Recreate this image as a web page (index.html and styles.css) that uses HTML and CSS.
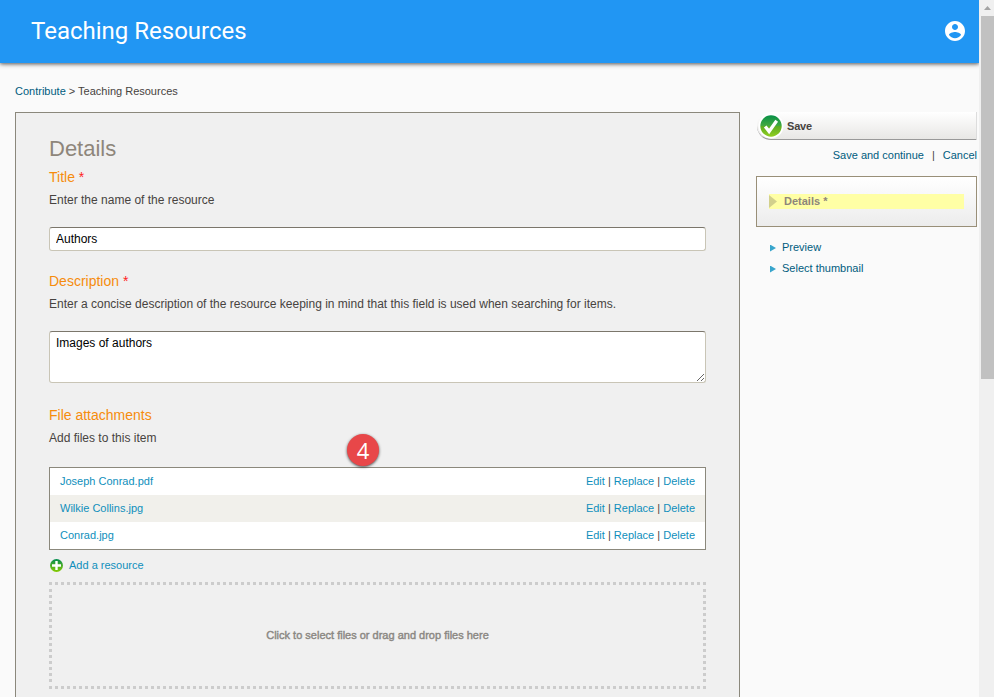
FILE: index.html
```html
<!DOCTYPE html>
<html lang="en">
<head>
<meta charset="utf-8">
<title>Teaching Resources</title>
<link rel="stylesheet" href="styles.css">
</head>
<body>
<div class="window">
  <div class="page">
    <header class="appbar">
      <h1 class="appbar-title">Teaching Resources</h1>
      <svg class="account" viewBox="0 0 24 24" width="24" height="24"><path fill="#fff" d="M12 2C6.48 2 2 6.48 2 12s4.480 10 10 10 10-4.480 10-10S17.520 2 12 2zm0 3c1.660 0 3 1.340 3 3s-1.340 3-3 3-3-1.340-3-3 1.340-3 3-3zm0 14.200c-2.500 0-4.710-1.280-6-3.220.030-1.990 4-3.080 6-3.080 1.990 0 5.970 1.090 6 3.080-1.290 1.940-3.500 3.220-6 3.220z"/></svg>
    </header>
    <nav class="crumbs"><a>Contribute</a> &gt; Teaching Resources</nav>
    <div class="columns">
      <main class="panel">
        <h2 class="heading">Details</h2>
        <section class="field">
          <h3 class="label">Title <span class="req">*</span></h3>
          <p class="hint">Enter the name of the resource</p>
          <input class="control line" type="text" value="Authors">
        </section>
        <section class="field">
          <h3 class="label">Description <span class="req">*</span></h3>
          <p class="hint">Enter a concise description of the resource keeping in mind that this field is used when searching for items.</p>
          <textarea class="control area">Images of authors</textarea>
        </section>
        <section class="field files-field">
          <h3 class="label">File attachments</h3>
          <p class="hint">Add files to this item</p>
          <div class="files">
            <div class="file"><a>Joseph Conrad.pdf</a><span class="actions"><a>Edit</a> | <a>Replace</a> | <a>Delete</a></span></div>
            <div class="file"><a>Wilkie Collins.jpg</a><span class="actions"><a>Edit</a> | <a>Replace</a> | <a>Delete</a></span></div>
            <div class="file"><a>Conrad.jpg</a><span class="actions"><a>Edit</a> | <a>Replace</a> | <a>Delete</a></span></div>
          </div>
          <span class="marker">4</span>
          <div class="add">
            <svg width="14" height="14" viewBox="0 0 14 14"><defs><linearGradient id="g1" x2="0" y2="1"><stop offset="0" stop-color="#008c50"/><stop offset=".5" stop-color="#4aac28"/><stop offset="1" stop-color="#86cc00"/></linearGradient></defs><circle cx="7.500" cy="7.500" r="6.500" fill="url(#g1)"/><path d="M7.500 3v9M3 7.500h9" stroke="#fff" stroke-width="2.400"/></svg>
            <a>Add a resource</a>
          </div>
          <div class="drop"><div class="drop-inner">Click to select files or drag and drop files here</div></div>
        </section>
      </main>
      <aside class="side">
        <button class="save">
          <svg width="26" height="26" viewBox="0 0 26 26"><defs><linearGradient id="g2" x2="0" y2="1"><stop offset="0" stop-color="#079048"/><stop offset=".48" stop-color="#42a940"/><stop offset=".52" stop-color="#5cac22"/><stop offset="1" stop-color="#92cf20"/></linearGradient></defs><circle cx="13" cy="13" r="12.500" fill="#fff"/><circle cx="13" cy="13" r="10.700" fill="url(#g2)"/><path d="M7.200 13.500l3.900 4.900 7.600-10.600" fill="none" stroke="#fff" stroke-width="3.300"/></svg>
          <span>Save</span>
        </button>
        <div class="links"><a>Save and continue</a><span>|</span><a>Cancel</a></div>
        <div class="steps"><div class="step"><i></i><span>Details *</span></div></div>
        <ul class="extra"><li><a>Preview</a></li><li><a>Select thumbnail</a></li></ul>
      </aside>
    </div>
  </div>
  <div class="scroll"><div class="arrow"></div><div class="thumb"></div></div>
</div>
</body>
</html>
```
FILE: styles.css
```css
* { box-sizing: border-box; }
body { margin: 0; background: #fafafa; font: 11px/14px "Liberation Sans", Arial, sans-serif; color: #474340; }
h1, h2, h3, p, ul { margin: 0; padding: 0; font-weight: normal; }
a { color: #005c7e; }
.window { display: flex; width: 994px; height: 697px; overflow: hidden; }
.page { flex: 1; min-width: 0; }
.appbar { height: 63px; padding: 0 12px 0 31px; display: flex; align-items: center; justify-content: space-between; background: #2196f3; box-shadow: 0 1px 5px rgba(0,0,0,.45), 0 1px 3px rgba(0,0,0,.3); }
.appbar-title { font: 24px/60px Roboto, sans-serif; padding-bottom: 2px; color: #fff; }
.account { display: block; margin-bottom: 1px; }
.crumbs { margin: 21px 0 14px 15px; }
.columns { display: flex; align-items: flex-start; gap: 16px; padding-left: 15px; }
.panel { width: 725px; height: 600px; padding: 23px 33px 0; border: 1px solid #8b887c; background: #f0f0f0; }
.heading { font-size: 22px; line-height: 26px; margin-bottom: 7px; color: #8e867b; }
.label { font-size: 14px; line-height: 16px; color: #f68c0c; }
.req { color: #f22; line-height: 1; }
.hint { font-size: 12px; line-height: 16px; margin: 7px 0 19px; }
.field { margin-bottom: 22px; }
.control { display: block; width: 657px; border: 1px solid #c9c5b6; border-top-color: #7b766b; border-radius: 3px; background: #fff; color: #000; font: 12px/14px "Liberation Sans", Arial, sans-serif; outline: none; }
.line { height: 24px; padding: 0 6px; }
.area { height: 52px; padding: 4px 6px; }
.files-field { margin-top: 24px; position: relative; }
.files-field .hint { margin: 7px 0 21px; }
.files { border: 1px solid #8b887c; background: #fff; }
.file { height: 27px; padding: 0 10px 1px; display: flex; justify-content: space-between; align-items: center; }
.file:nth-child(even) { background: #f1f0eb; }
.file a, .add a { color: #0f8fbc; }
.marker { position: absolute; left: 298px; top: 27px; width: 32px; height: 32px; border-radius: 50%; background: #e84749; box-shadow: 0 1px 3px rgba(0,0,0,.7); color: #fff; font: 22px/32px "Open Sans", sans-serif; text-align: center; }
.add { display: flex; align-items: center; gap: 6px; height: 32px; padding-bottom: 2px; }
.add svg { display: block; }
.drop { width: 657px; height: 107px; background: repeating-linear-gradient(90deg, #ccc 0 3px, transparent 3px 6px) top / 100% 3px no-repeat, repeating-linear-gradient(90deg, #ccc 0 3px, transparent 3px 6px) bottom / 100% 3px no-repeat; padding-top: 7px; }
.drop-inner { height: 93px; background: repeating-linear-gradient(#ccc 0 3px, transparent 3px 6px) left / 3px 100% no-repeat, repeating-linear-gradient(#ccc 0 3px, transparent 3px 6px) right / 3px 100% no-repeat; text-align: center; line-height: 92px; -webkit-text-stroke: .4px #8a8782; color: #8a8782; }
.side { width: 221px; }
.save { display: flex; align-items: center; gap: 3px; width: 220px; height: 28px; margin: 0 0 0 1px; padding: 0 0 0 1px; border: 0; border-bottom: 1px solid #999; border-right: 1px solid #ddd; border-radius: 14px 0 0 14px; background: linear-gradient(#fff, #e8e7e5); color: #474340; font: bold 11px/14px "Liberation Sans", Arial, sans-serif; letter-spacing: -.2px; }
.save svg { display: block; }
.links { display: flex; justify-content: flex-end; gap: 8px; margin-top: 8px; }
.steps { height: 51px; margin-top: 14px; padding: 17px 12px; border: 1px solid #998f78; background: linear-gradient(#fff, #ececec); }
.step { display: flex; align-items: center; height: 15px; background: #ffffa5; color: #8e867b; font-weight: bold; }
.step i { width: 8px; height: 13px; margin-right: 7px; background: #d2d08c; clip-path: polygon(0 0, 100% 50%, 0 100%); }
.step span { padding-bottom: 2px; }
.extra { list-style: none; margin-top: 13px; }
.extra li { display: flex; align-items: center; gap: 6px; height: 14px; margin-bottom: 7px; padding-left: 14px; }
.extra li::before { content: ""; width: 6px; height: 7px; margin-top: 2px; background: #38a5cc; clip-path: polygon(0 0, 100% 50%, 0 100%); }
.scroll { width: 15px; background: #f0f0f0; padding-left: 2px; }
.arrow { width: 7px; height: 4px; margin: 6px 0 6px 3px; background: #a3a3a3; clip-path: polygon(50% 0, 100% 100%, 0 100%); }
.thumb { height: 363px; background: #c1c1c1; }
```
